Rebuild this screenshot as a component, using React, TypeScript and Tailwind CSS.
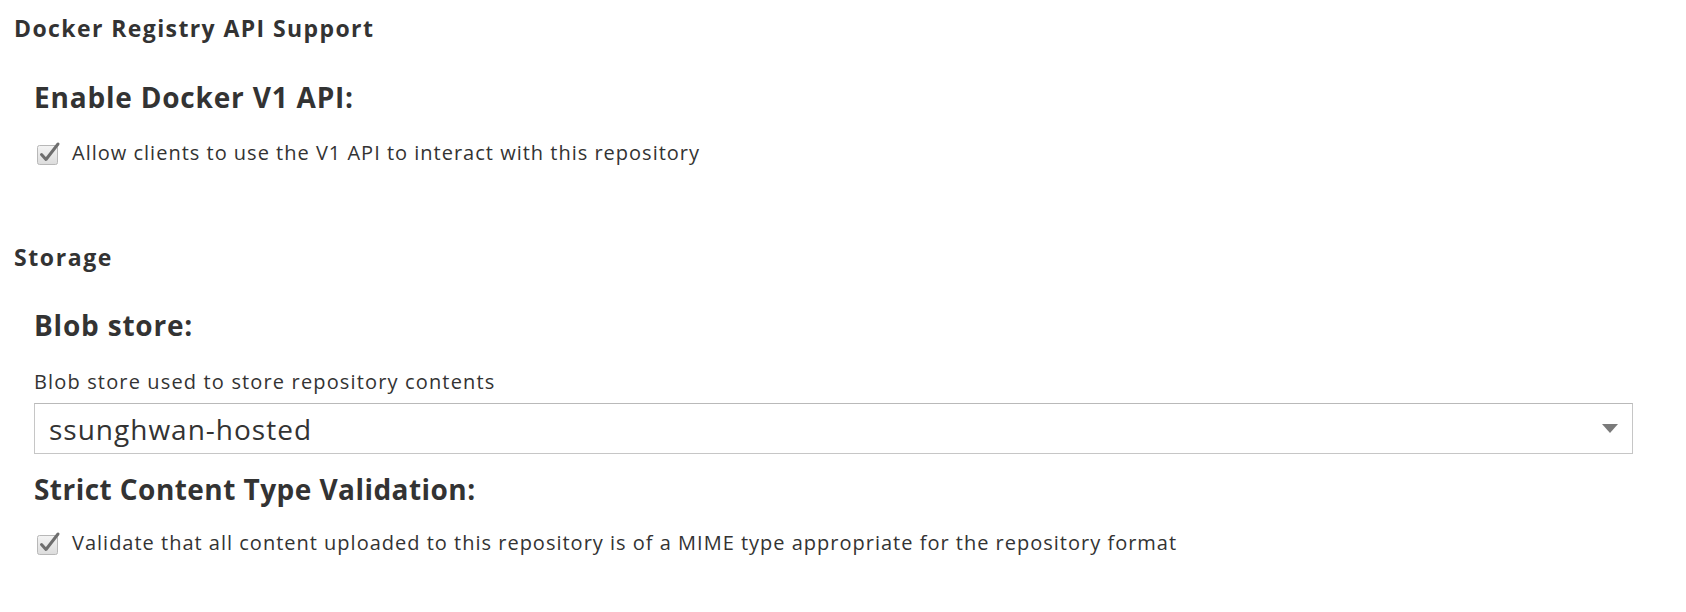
import React from "react";

function CheckIcon() {
  return (
    <svg width="26" height="26" viewBox="0 0 26 26" className="shrink-0">
      <defs>
        <linearGradient id="cbg" x1="0" y1="0" x2="0" y2="1">
          <stop offset="0" stopColor="#f4f4f4" />
          <stop offset="1" stopColor="#dcdcdc" />
        </linearGradient>
      </defs>
      <rect x="1.5" y="5.5" width="20" height="19" rx="2" fill="url(#cbg)" stroke="#b8b8b8" />
      <path d="M5.5 14.5 L10 19.5 L22 4" fill="none" stroke="#6e6e6e" strokeWidth="3" strokeLinecap="round" strokeLinejoin="round" />
    </svg>
  );
}

function CheckRow({ label }: { label: string }) {
  return (
    <div className="flex items-center gap-[10px] pl-[36px] text-[20px] leading-[26px] tracking-[1px] text-[#333]">
      <CheckIcon />
      <span>{label}</span>
    </div>
  );
}

export default function App() {
  return (
    <div className="w-[1686px] h-[612px] bg-white text-[#333] font-['Open_Sans',sans-serif] overflow-hidden">
      {/* Docker Registry API Support */}
      <div className="pl-[14px] pt-[15px]">
        <h2 className="text-[23px] font-bold leading-[26px] tracking-[1.4px]">Docker Registry API Support</h2>
      </div>
      <div className="pl-[34px] pt-[40px]">
        <h3 className="text-[28px] font-bold leading-[32px] tracking-[0.8px]">Enable Docker V1 API:</h3>
      </div>
      <div className="pt-[27px]">
        <CheckRow label="Allow clients to use the V1 API to interact with this repository" />
      </div>

      {/* Storage */}
      <div className="pl-[14px] pt-[78px]">
        <h2 className="text-[23px] font-bold leading-[26px] tracking-[1.6px]">Storage</h2>
      </div>
      <div className="pl-[34px] pt-[39px]">
        <h3 className="text-[28px] font-bold leading-[32px] tracking-[0.8px]">Blob store:</h3>
      </div>
      <div className="pl-[34px] pt-[29px] text-[20px] leading-[24px] tracking-[1.15px]">Blob store used to store repository contents</div>
      <div className="pl-[34px] pr-[53px] pt-[9px]">
        <div className="h-[51px] border border-[#c6c6c6] border-t-[#b9b9b9] flex items-center justify-between pl-[14px] pr-[14px]">
          <span className="text-[28px] tracking-[1px]">ssunghwan-hosted</span>
          <svg width="16" height="10" viewBox="0 0 16 10">
            <path d="M0 0 H16 L8 9 Z" fill="#7a7a7a" />
          </svg>
        </div>
      </div>
      <div className="pl-[34px] pt-[19px]">
        <h3 className="text-[28px] font-bold leading-[32px] tracking-[0.45px]">Strict Content Type Validation:</h3>
      </div>
      <div className="pt-[25px]">
        <CheckRow label="Validate that all content uploaded to this repository is of a MIME type appropriate for the repository format" />
      </div>
    </div>
  );
}
